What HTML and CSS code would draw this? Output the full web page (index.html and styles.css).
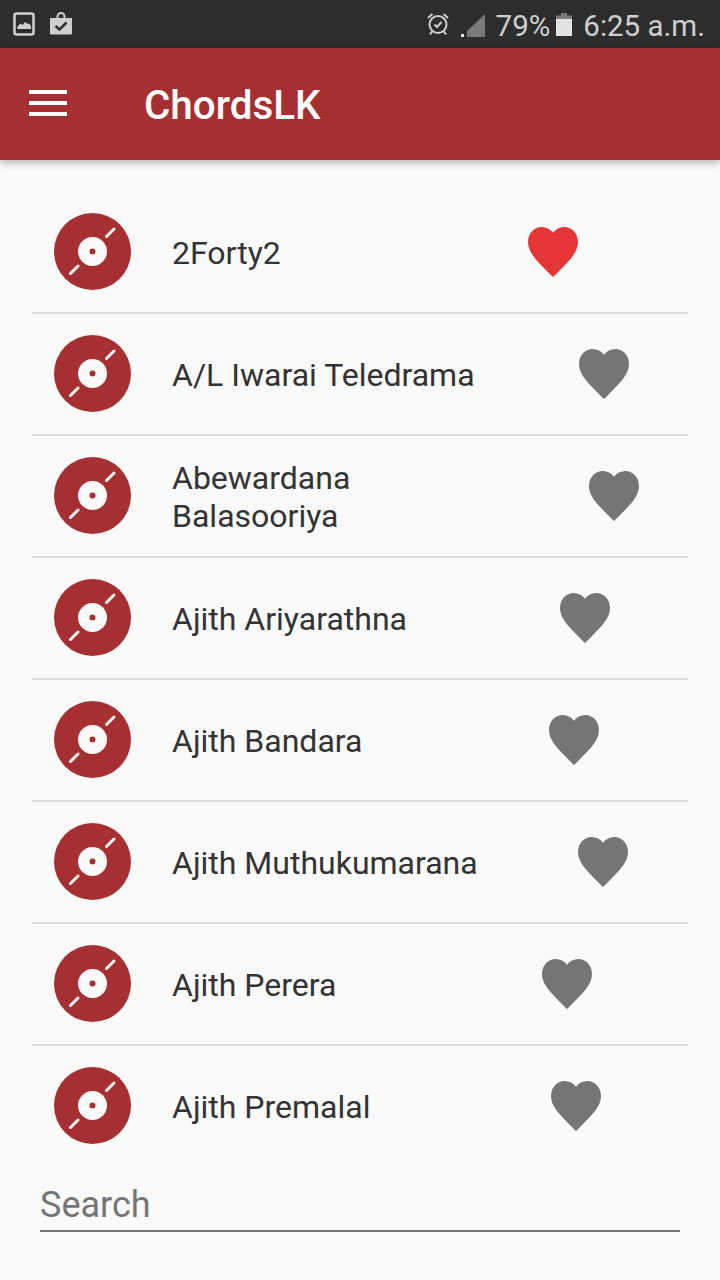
FILE: index.html
```html
<!DOCTYPE html>
<html lang="en">
<head>
<meta charset="utf-8">
<title>ChordsLK</title>
<link rel="stylesheet" href="styles.css">
</head>
<body>
<svg class="defs" width="0" height="0" aria-hidden="true">
  <symbol id="disc" viewBox="0 0 77 77">
    <circle cx="38.5" cy="38.5" r="38.5" fill="#a52f31"/>
    <circle cx="38.5" cy="38.5" r="14.5" fill="#fafafa"/>
    <circle cx="38.5" cy="38.5" r="3" fill="#a52f31"/>
    <path d="M52.500 23.500L60 16M16.500 60.500L24 53" stroke="#fafafa" stroke-width="3" stroke-linecap="round" fill="none"/>
  </symbol>
  <symbol id="heart" viewBox="2 3 20 18.35" preserveAspectRatio="none">
    <path d="M12 21.35l-1.45-1.32C5.4 15.36 2 12.28 2 8.5 2 5.42 4.42 3 7.5 3c1.74 0 3.41.81 4.5 2.09C13.09 3.81 14.76 3 16.5 3 19.58 3 22 5.42 22 8.5c0 3.78-3.4 6.86-8.55 11.54L12 21.35z"/>
  </symbol>
</svg>
<div class="phone">
  <header class="status">
    <div class="status-left">
      <svg class="ic-image" viewBox="0 0 22 24"><rect x="1.500" y="1.500" width="19" height="21" rx="2" fill="none" stroke="#cfcfcf" stroke-width="2.500"/><path d="M4.500 17v-2.500l3-3 2 1.500 2.500-3 2.500 2 1.500-.5 2 2.500V17z" fill="#cfcfcf"/></svg>
      <svg class="ic-bag" viewBox="0 0 24 23"><path d="M1 6h6.500V4.500a4.500 4.500 0 0 1 9 0V6H23v15a1.500 1.500 0 0 1-1.500 1.500h-19A1.500 1.500 0 0 1 1 21zM9.500 6h5V4.500a2.500 2.500 0 0 0-5 0z" fill="#cfcfcf" fill-rule="evenodd"/><path d="M6.500 14l4 3.500 7-7" fill="none" stroke="#2d2d2d" stroke-width="2.500"/></svg>
    </div>
    <div class="status-right">
      <svg class="ic-alarm" viewBox="0 0 22 24" fill="none" stroke="#cfcfcf" stroke-width="2"><circle cx="11" cy="12.500" r="8.500"/><path d="M7.500 12.500l2.500 2.500 4.500-5M1 6l4.500-4M21 6l-4.500-4M5 19.500l-2 3M17 19.500l2 3"/></svg>
      <svg class="ic-signal" viewBox="0 0 24 24"><path d="M6 24V18L24 1v23z" fill="#7a7a7a"/><path d="M0 24v-3h3v3z" fill="#e6e6e6"/></svg>
      <span class="status-text">79%</span>
      <svg class="ic-battery" viewBox="0 0 16 23"><path d="M5 0h6v2.500h5V6H0V2.500h5z" fill="#7a7a7a"/><rect y="6" width="16" height="17" fill="#e2e2e2"/></svg>
      <span class="status-text">6:25 a.m.</span>
    </div>
  </header>
  <div class="appbar">
    <div class="menu"><span></span><span></span><span></span></div>
    <h1 class="title">ChordsLK</h1>
  </div>
  <ul class="list">
    <li class="row"><svg class="disc"><use href="#disc"/></svg><span class="name">2Forty2</span><svg class="heart heart-on" style="margin-right:110px"><use href="#heart"/></svg></li>
    <li class="row"><svg class="disc"><use href="#disc"/></svg><span class="name">A/L Iwarai Teledrama</span><svg class="heart" style="margin-right:59px"><use href="#heart"/></svg></li>
    <li class="row"><svg class="disc"><use href="#disc"/></svg><span class="name">Abewardana<br>Balasooriya</span><svg class="heart" style="margin-right:49px"><use href="#heart"/></svg></li>
    <li class="row"><svg class="disc"><use href="#disc"/></svg><span class="name">Ajith Ariyarathna</span><svg class="heart" style="margin-right:78px"><use href="#heart"/></svg></li>
    <li class="row"><svg class="disc"><use href="#disc"/></svg><span class="name">Ajith Bandara</span><svg class="heart" style="margin-right:89px"><use href="#heart"/></svg></li>
    <li class="row"><svg class="disc"><use href="#disc"/></svg><span class="name">Ajith Muthukumarana</span><svg class="heart" style="margin-right:60px"><use href="#heart"/></svg></li>
    <li class="row"><svg class="disc"><use href="#disc"/></svg><span class="name">Ajith Perera</span><svg class="heart" style="margin-right:96px"><use href="#heart"/></svg></li>
    <li class="row row-last"><svg class="disc"><use href="#disc"/></svg><span class="name">Ajith Premalal</span><svg class="heart" style="margin-right:87px"><use href="#heart"/></svg></li>
  </ul>
  <div class="search"><span class="search-text">Search</span></div>
</div>
</body>
</html>
```
FILE: styles.css
```css
* { box-sizing: border-box; }
html, body { margin: 0; padding: 0; }
body { background: #fafafa; font-family: Roboto, "Liberation Sans", sans-serif; }
.defs { position: absolute; }
.phone { width: 720px; height: 1280px; overflow: hidden; display: flex; flex-direction: column; background: #fafafa; }

.status { height: 48px; flex: none; background: #2d2d2d; display: flex; justify-content: space-between; align-items: center; padding: 0 15px 0 13px; color: #cfcfcf; }
.status-left { display: flex; align-items: center; gap: 14px; }
.status-right { display: flex; align-items: center; font-size: 29.5px; line-height: 40px; height: 48px; }
.status-text { margin-top: 4px; }
.ic-image { width: 22px; height: 24px; display: block; }
.ic-bag { width: 24px; height: 23px; display: block; margin-top: -1px; }
.ic-alarm { width: 22px; height: 24px; display: block; margin-right: 12px; }
.ic-signal { width: 24px; height: 24px; display: block; margin-right: 11px; margin-top: 1px; }
.ic-battery { width: 16px; height: 23px; display: block; margin: 1px 11px 0 6px; }

.appbar { height: 112px; flex: none; background: #a52f31; display: flex; align-items: center; padding-left: 29px; box-shadow: 0 3px 8px rgba(0,0,0,.28); position: relative; }
.menu { width: 38px; display: flex; flex-direction: column; gap: 7px; margin-top: -2px; }
.menu span { display: block; height: 4px; background: #fff; }
.title { margin: 4px 0 0 77px; font-size: 40.4px; font-weight: 500; color: #fff; line-height: 44px; }

.list { list-style: none; margin: 32px 32px 0; padding: 0; }
.row { height: 122px; display: flex; align-items: center; border-bottom: 2px solid #dedede; padding-left: 21.5px; }
.row-last { border-bottom: 0; padding-bottom: 2px; }
.disc { width: 77px; height: 77px; flex: none; margin-top: -1px; }
.name { flex: 1; margin: 2px 0 0 41.5px; font-size: 32px; line-height: 38px; color: #333; }
.heart { width: 50px; height: 50px; flex: none; fill: #757575; }
.heart-on { fill: #e53535; }

.search { margin: 14px 40px 0; height: 50px; border-bottom: 2px solid #757575; display: flex; align-items: center; }
.search-text { font-size: 36px; color: #757575; line-height: 44px; margin-top: -2px; }
```
